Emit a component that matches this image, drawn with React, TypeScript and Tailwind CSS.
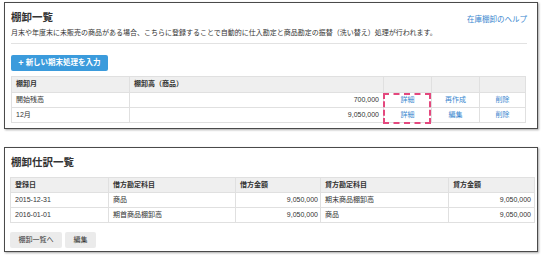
import React from 'react';

const font = { fontFamily: '"Liberation Sans", "Noto Sans CJK JP", sans-serif' };

const Link: React.FC<{ children: React.ReactNode }> = ({ children }) => (
  <a href="#" className="text-[#3a87cf]">{children}</a>
);

const App: React.FC = () => {
  const stockRows = [
    { month: '開始残高', amount: '700,000', mid: '再作成' },
    { month: '12月', amount: '9,050,000', mid: '編集' },
  ];

  const journalRows = [
    { date: '2015-12-31', debit: '商品', debitAmount: '9,050,000', credit: '期末商品棚卸高', creditAmount: '9,050,000' },
    { date: '2016-01-01', debit: '期首商品棚卸高', debitAmount: '9,050,000', credit: '商品', creditAmount: '9,050,000' },
  ];

  return (
    <div className="w-[550px] h-[261px] bg-white text-[#333] pt-[2px] pl-[4px]" style={font}>
      {/* 棚卸一覧 */}
      <div className="relative w-[534px] h-[127px] border border-[#4a4a4a] shadow-[1px_1px_2px_rgba(0,0,0,0.35)] pt-[7px] pl-[6px] pr-[10px]">
        <div className="flex items-center justify-between h-[14px]">
          <h2 className="text-[10.5px] font-bold leading-[14px]">棚卸一覧</h2>
          <Link><span className="text-[7.5px]">在庫棚卸のヘルプ</span></Link>
        </div>
        <p className="mt-[4px] text-[7px] leading-[10px]">
          月末や年度末に未販売の商品がある場合、こちらに登録することで自動的に仕入勘定と商品勘定の振替（洗い替え）処理が行われます。
        </p>
        <div className="mt-[5px] border-t border-[#e2e2e2]" />
        <button className="mt-[11px] h-[16px] w-[97px] rounded-[2px] bg-[#3b9bdc] text-white text-[7.5px] font-bold flex items-center justify-center gap-[2px]">
          <span className="text-[9px] leading-none">+</span>新しい期末処理を入力
        </button>
        <table className="mt-[5px] w-[514px] table-fixed border-collapse text-[7px]">
          <colgroup>
            <col className="w-[118px]" />
            <col className="w-[254px]" />
            <col className="w-[48px]" />
            <col className="w-[48px]" />
            <col className="w-[46px]" />
          </colgroup>
          <thead>
            <tr className="h-[16px] bg-[#efefef] font-bold">
              <th className="border border-[#e0e0e0] px-[4px] text-left">棚卸月</th>
              <th className="border border-[#e0e0e0] px-[4px] text-left">棚卸高（商品）</th>
              <th className="border border-[#e0e0e0]" />
              <th className="border border-[#e0e0e0]" />
              <th className="border border-[#e0e0e0]" />
            </tr>
          </thead>
          <tbody>
            {stockRows.map((row) => (
              <tr key={row.month} className="h-[15px]">
                <td className="border border-[#e0e0e0] px-[4px]">{row.month}</td>
                <td className="border border-[#e0e0e0] px-[4px] text-right">{row.amount}</td>
                <td className="border border-[#e0e0e0] text-center"><Link>詳細</Link></td>
                <td className="border border-[#e0e0e0] text-center"><Link>{row.mid}</Link></td>
                <td className="border border-[#e0e0e0] text-center"><Link>削除</Link></td>
              </tr>
            ))}
          </tbody>
        </table>
        {/* highlight annotation */}
        <div className="absolute left-[378px] top-[90px] w-[48px] h-[31px] border-2 border-dashed border-[#e4487e]" />
      </div>

      {/* 棚卸仕訳一覧 */}
      <div className="mt-[18px] w-[534px] h-[105px] border border-[#4a4a4a] shadow-[1px_1px_2px_rgba(0,0,0,0.35)] pt-[7px] pl-[5px] pr-[3px]">
        <h2 className="pl-[1px] text-[10.5px] font-bold leading-[14px]">棚卸仕訳一覧</h2>
        <table className="mt-[8px] w-[524px] table-fixed border-collapse text-[7px]">
          <colgroup>
            <col className="w-[98px]" />
            <col className="w-[127px]" />
            <col className="w-[85px]" />
            <col className="w-[128px]" />
            <col className="w-[86px]" />
          </colgroup>
          <thead>
            <tr className="h-[15px] bg-[#efefef] font-bold">
              <th className="border border-[#e0e0e0] px-[4px] text-left">登録日</th>
              <th className="border border-[#e0e0e0] px-[4px] text-left">借方勘定科目</th>
              <th className="border border-[#e0e0e0] px-[4px] text-left">借方金額</th>
              <th className="border border-[#e0e0e0] px-[4px] text-left">貸方勘定科目</th>
              <th className="border border-[#e0e0e0] px-[4px] text-left">貸方金額</th>
            </tr>
          </thead>
          <tbody>
            {journalRows.map((row) => (
              <tr key={row.date} className="h-[15px]">
                <td className="border border-[#e0e0e0] px-[4px]">{row.date}</td>
                <td className="border border-[#e0e0e0] px-[4px]">{row.debit}</td>
                <td className="border border-[#e0e0e0] px-[2px] text-right">{row.debitAmount}</td>
                <td className="border border-[#e0e0e0] px-[4px]">{row.credit}</td>
                <td className="border border-[#e0e0e0] px-[3px] text-right">{row.creditAmount}</td>
              </tr>
            ))}
          </tbody>
        </table>
        <div className="mt-[9px] flex gap-[3px]">
          <button className="h-[16px] w-[52px] rounded-[2px] bg-[#ebebeb] text-[7px]">棚卸一覧へ</button>
          <button className="h-[16px] w-[31px] rounded-[2px] bg-[#ebebeb] text-[7px]">編集</button>
        </div>
      </div>
    </div>
  );
};

export default App;
